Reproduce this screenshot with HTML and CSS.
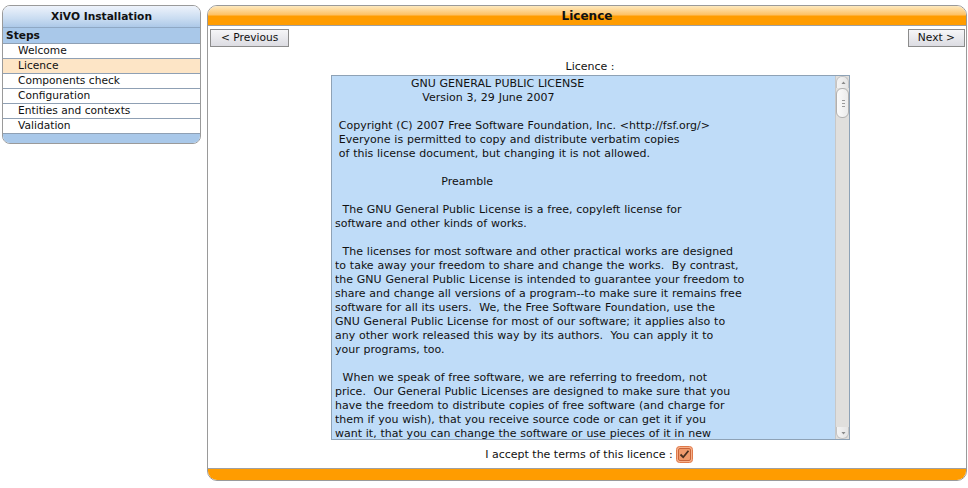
FILE: index.html
```html
<!DOCTYPE html>
<html>
<head>
<meta charset="utf-8">
<title>XiVO Installation</title>
<link rel="stylesheet" href="styles.css">
</head>
<body>
<div class="page">
  <div class="sidebar">
    <div class="side-head">XiVO Installation</div>
    <div class="steps-title">Steps</div>
    <ul class="steps">
      <li>Welcome</li>
      <li class="active">Licence</li>
      <li>Components check</li>
      <li>Configuration</li>
      <li>Entities and contexts</li>
      <li>Validation</li>
    </ul>
    <div class="side-foot"></div>
  </div>
  <div class="main">
    <div class="main-head">Licence</div>
    <div class="nav">
      <button class="btn">&lt; Previous</button>
      <button class="btn">Next &gt;</button>
    </div>
    <div class="label">Licence :</div>
    <div class="licence">
      <div class="licence-text">                    GNU GENERAL PUBLIC LICENSE
                       Version 3, 29 June 2007

 Copyright (C) 2007 Free Software Foundation, Inc. &lt;http://fsf.org/&gt;
 Everyone is permitted to copy and distribute verbatim copies
 of this license document, but changing it is not allowed.

                            Preamble

  The GNU General Public License is a free, copyleft license for
software and other kinds of works.

  The licenses for most software and other practical works are designed
to take away your freedom to share and change the works.  By contrast,
the GNU General Public License is intended to guarantee your freedom to
share and change all versions of a program--to make sure it remains free
software for all its users.  We, the Free Software Foundation, use the
GNU General Public License for most of our software; it applies also to
any other work released this way by its authors.  You can apply it to
your programs, too.

  When we speak of free software, we are referring to freedom, not
price.  Our General Public Licenses are designed to make sure that you
have the freedom to distribute copies of free software (and charge for
them if you wish), that you receive source code or can get it if you
want it, that you can change the software or use pieces of it in new
free programs, and that you know you can do these things.</div>
      <div class="scrollbar">
        <div class="sb-btn"><svg width="13" height="12" viewBox="0 0 13 12"><path d="M4.5 7 L6.5 4.5 L8.5 7 Z" fill="#8a8a8a"/></svg></div>
        <div class="sb-track">
          <div class="sb-thumb"><svg width="13" height="30" viewBox="0 0 13 30"><path d="M5 11.5h3M5 14.5h3M5 17.5h3" stroke="#9a9a9a" stroke-width="1"/></svg></div>
        </div>
        <div class="sb-btn sb-down"><svg width="13" height="12" viewBox="0 0 13 12"><path d="M4.5 5 L6.5 7.5 L8.5 5 Z" fill="#8a8a8a"/></svg></div>
      </div>
    </div>
    <div class="accept">
      <span>I accept the terms of this licence :</span>
      <span class="check"><svg width="17" height="17" viewBox="0 0 17 17"><rect x="0.5" y="0.5" width="16" height="16" rx="3" fill="#f7b08a" stroke="#e07a4a"/><rect x="2.5" y="2.5" width="12" height="12" rx="1.5" fill="#f09a6c" stroke="#c8643a"/><path d="M4.5 8.5 L7.2 11.2 L12.5 4.8" fill="none" stroke="#4a3020" stroke-width="1.8"/></svg></span>
    </div>
    <div class="main-foot"></div>
  </div>
</div>
</body>
</html>
```
FILE: styles.css
```css
html, body {
  margin: 0;
  padding: 0;
  background: #fff;
}
body {
  font-family: "DejaVu Sans", Verdana, sans-serif;
  font-size: 8pt;
  color: #111;
}
.page {
  display: flex;
  align-items: flex-start;
  gap: 6px;
  padding: 5px 1px 0 2px;
}
.sidebar {
  width: 197px;
  border: 1px solid #9a9a9a;
  border-radius: 8px;
  overflow: hidden;
  flex: none;
}
.side-head {
  height: 21px;
  line-height: 21px;
  text-align: center;
  font-weight: bold;
  font-size: 8pt;
  background: linear-gradient(#eef3fb, #c9dcf1 60%, #adc9e8);
  border-bottom: 1px solid #8fa8c4;
}
.steps-title {
  height: 15px;
  line-height: 15px;
  padding-left: 3px;
  font-weight: bold;
  background: #a9c8e9;
  border-bottom: 1px solid #8fa0b4;
}
.steps {
  list-style: none;
  margin: 0;
  padding: 0;
}
.steps li {
  height: 14px;
  line-height: 14px;
  padding-left: 15px;
  background: #fff;
  border-bottom: 1px solid #8fa0b4;
}
.steps li.active {
  background: #fde5c6;
}
.side-foot {
  height: 9px;
  background: #a9c8e9;
}
.main {
  flex: 1;
  height: 474px;
  border: 1px solid #9a9a9a;
  border-radius: 10px;
  overflow: hidden;
  display: flex;
  flex-direction: column;
  font-size: 11px;
}
.main-head {
  height: 19px;
  line-height: 20px;
  text-align: center;
  font-weight: bold;
  font-size: 9pt;
  background: linear-gradient(#fde9bf, #fec266 45%, #ff9c00 55%, #ff9c00);
  border-bottom: 1px solid #a0a0a0;
}
.nav {
  display: flex;
  justify-content: space-between;
  padding: 3px 1px 0 2px;
}
.btn {
  font-family: "DejaVu Sans", Verdana, sans-serif;
  font-size: 8pt;
  color: #111;
  height: 18px;
  padding: 0 10px;
  border: 1px solid #8c8c8c;
  border-radius: 0;
  background: linear-gradient(#f6f6f8, #dcdce2);
  line-height: 16px;
}
.btn + .btn {
  padding: 0 9px;
}
.label {
  text-align: center;
  margin-top: 13px;
  line-height: 14px;
  padding-left: 6px;
}
.licence {
  display: flex;
  width: 514px;
  height: 363px;
  margin: 1px 0 0 123px;
  padding-left: 3px;
  border: 1px solid #8ea2b6;
  background: #bfdcf8;
  font-size: 11px;
  word-spacing: 0.3px;
}
.licence-text {
  flex: 1;
  overflow: hidden;
  white-space: pre;
  line-height: 14px;
  padding-top: 1px;
}
.scrollbar {
  width: 13px;
  display: flex;
  flex-direction: column;
  background: #e0dfdd;
  border-left: 1px solid #c8c8c8;
}
.sb-btn {
  height: 12px;
  background: linear-gradient(90deg, #f4f4f4, #e4e4e4);
  border-radius: 6px 6px 0 0;
  border: 1px solid #c4c4c4;
  border-bottom: none;
  box-sizing: border-box;
}
.sb-btn svg, .sb-thumb svg { display: block; }
.sb-down {
  border-radius: 0 0 6px 6px;
  border: 1px solid #c4c4c4;
  border-top: none;
}
.sb-track {
  flex: 1;
}
.sb-thumb {
  height: 30px;
  box-sizing: border-box;
  border: 1px solid #b0b0b0;
  border-radius: 6px;
  background: linear-gradient(90deg, #fbfbfb, #ececec);
}
.accept {
  display: flex;
  justify-content: center;
  align-items: center;
  gap: 3px;
  margin-top: 6px;
  padding-left: 4px;
  height: 17px;
}
.check svg { display: block; }
.main-foot {
  margin-top: auto;
  height: 11px;
  background: #ff9c00;
  border-top: 1px solid #a0a0a0;
}
```
